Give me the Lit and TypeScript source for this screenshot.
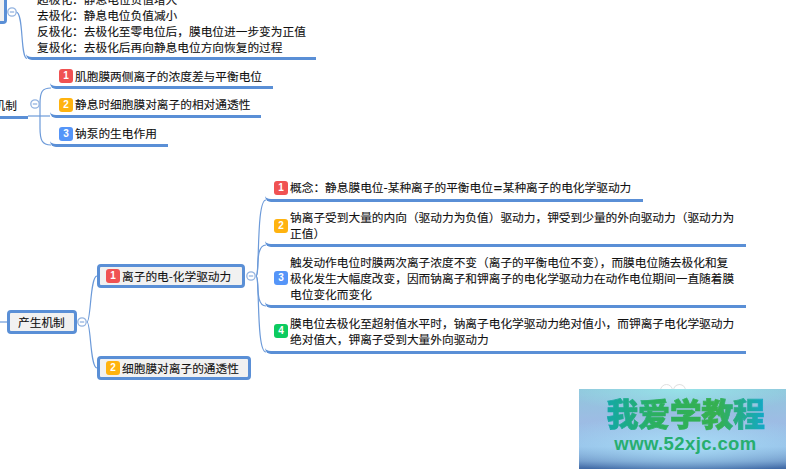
import { LitElement, html, css, svg } from "lit";
import { customElement } from "lit/decorators.js";

type Topic = { x: number; bottom: number; w: number; h: number; n?: number; lines: string[]; pad: number; lift?: number };

const BADGE = ["", "#f05252", "#ffb30f", "#5595f8", "#0ccb5f"];

const topics: Topic[] = [
  { x: 26, bottom: 60, w: 290, h: 70, pad: 11, lift: 2, lines: ["超极化：静息电位负值增大", "去极化：静息电位负值减小", "反极化：去极化至零电位后，膜电位进一步变为正值", "复极化：去极化后再向静息电位方向恢复的过程"] },
  { x: 50, bottom: 89, w: 223, h: 24, n: 1, pad: 9, lines: ["肌胞膜两侧离子的浓度差与平衡电位"] },
  { x: 50, bottom: 118, w: 211, h: 24, n: 2, pad: 9, lift: 2, lines: ["静息时细胞膜对离子的相对通透性"] },
  { x: 50, bottom: 147, w: 118, h: 24, n: 3, pad: 9, lift: 2, lines: ["钠泵的生电作用"] },
  { x: 265, bottom: 202, w: 378, h: 26, n: 1, pad: 9, lines: ["概念：静息膜电位-某种离子的平衡电位=某种离子的电化学驱动力"] },
  { x: 265, bottom: 247, w: 481, h: 40, n: 2, pad: 9, lift: 1, lines: ["钠离子受到大量的内向（驱动力为负值）驱动力，钾受到少量的外向驱动力（驱动力为", "正值）"] },
  { x: 265, bottom: 308, w: 481, h: 58, n: 3, pad: 9, lines: ["触发动作电位时膜两次离子浓度不变（离子的平衡电位不变），而膜电位随去极化和复", "极化发生大幅度改变，因而钠离子和钾离子的电化学驱动力在动作电位期间一直随着膜", "电位变化而变化"] },
  { x: 265, bottom: 354, w: 481, h: 43, n: 4, pad: 9, lines: ["膜电位去极化至超射值水平时，钠离子电化学驱动力绝对值小，而钾离子电化学驱动力", "绝对值大，钾离子受到大量外向驱动力"] },
];

const boxes = [
  { x: 7, y: 310, w: 70, h: 24, pad: 8, label: "产生机制" },
  { x: 97, y: 264, w: 148, h: 24, pad: 6, n: 1, label: "离子的电-化学驱动力" },
  { x: 97, y: 356, w: 154, h: 24, pad: 6, n: 2, label: "细胞膜对离子的通透性" },
];

const wires = [
  "M16 12 C24 12 20 58 27 58.5",
  "M40 104 C40 92 42 88 51 88",
  "M40 104 L40 128 C40 140 42 145 51 145",
  "M28 116 L50 116",
  "M0 322 L7 322",
  "M87 322 C91 322 90 276 97 276",
  "M87 322 C91 322 90 368 97 368",
  "M256 276 C260 276 256 200 266 200",
  "M256 276 C260 276 254 245 266 245",
  "M256 276 C260 276 254 306 266 306",
  "M256 276 C260 276 256 352 266 352",
];

const toggles = [[12, 12], [35, 104], [82, 322], [251, 276]];

const withSymbols = (line: string) =>
  line.split(/([-=])/).map((part) => (part === "-" || part === "=" ? html`<span class="sym">${part}</span>` : part));

@customElement("app-root")
export class AppRoot extends LitElement {
  static styles = css`
    :host { display: block; width: 786px; height: 469px; }
    .canvas {
      position: relative; width: 786px; height: 469px; overflow: hidden; background: #fff;
      font: 11.7px/16px "Noto Sans CJK SC", "Noto Sans", sans-serif; color: #111;
      -webkit-text-stroke: 0.1px #111;
    }
    .sym { font-family: "DejaVu Sans", sans-serif; }
    .wires { position: absolute; inset: 0; }
    .wire { fill: none; stroke: #6c9ad9; stroke-width: 1.2; }
    .toggle { fill: #fff; stroke: #93b3e0; stroke-width: 1.3; }
    .dash { stroke: #93b3e0; stroke-width: 1.3; }
    .topic {
      position: absolute; box-sizing: border-box; display: flex; align-items: center;
      border-bottom: 3px solid #5a8fd6; border-radius: 0 0 0 6px;
    }
    .lines { white-space: nowrap; }
    .badge {
      flex: none; width: 14px; height: 14px; border-radius: 3px; color: #fff; font-weight: 700;
      font-size: 10px; line-height: 14px; text-align: center; margin-right: 2px;
      font-family: "Liberation Sans", sans-serif; -webkit-text-stroke: 0;
    }
    .box {
      position: absolute; box-sizing: border-box; display: flex; align-items: center;
      border: 3px solid #5a8fd6; border-radius: 4px; background: #f1f1f1; white-space: nowrap;
    }
    .stub { position: absolute; left: -10px; top: 101px; width: 38px; height: 15px; border-bottom: 3px solid #5a8fd6; text-align: right; line-height: 8px; }
    .stub span { position: relative; left: -11px; }
    .corner { position: absolute; left: -3px; top: -2px; width: 10px; height: 26px; box-sizing: border-box; border: 3px solid #5a8fd6; border-left: 0; border-top: 0; border-radius: 0 0 4px 0; background: #f1f1f1; }
    .mark {
      position: absolute; left: 579px; top: 389px; width: 207px; height: 80px; overflow: hidden;
      box-sizing: border-box; padding-left: 6px;
      display: flex; flex-direction: column; align-items: center; -webkit-text-stroke: 0;
      background: radial-gradient(ellipse 70% 38% at 50% 70%, #a8dcf6 0%, rgba(168,220,246,0) 100%),
        radial-gradient(ellipse 60% 30% at 50% 0%, #97e2e8 0%, rgba(151,226,232,0) 100%),
        linear-gradient(180deg, #90c6dc 0%, #9dbce4 40%, #95bfe8 72%, #6f97c8 90%, #3f68a4 100%);
    }
    .mark-title {
      margin-top: 4px; font: 900 32px/38px "Noto Sans CJK SC", sans-serif; letter-spacing: -0.4px;
      background: linear-gradient(90deg, #12a8a8 0%, #2bb060 30%, #35b050 70%, #12a8c8 100%);
      -webkit-background-clip: text; background-clip: text; color: transparent;
      -webkit-text-stroke: 0.7px transparent;
    }
    .mark-url { margin-top: 2px; font: 700 18.5px/22px "Liberation Sans", sans-serif; color: #27ae6f; letter-spacing: 0.4px; }
    .ghost { position: absolute; left: 660px; top: 384px; width: 11px; height: 11px; border: 1px solid #e0e0e0; border-radius: 50%; box-shadow: 13px 0 0 -1px #fff, 13px 0 0 0 #e0e0e0; }
  `;

  render() {
    return html`<div class="canvas">
      <svg class="wires" width="786" height="469">
        ${wires.map((d) => svg`<path class="wire" d=${d}></path>`)}
        ${toggles.map(([x, y]) => svg`
          <circle class="toggle" cx=${x} cy=${y} r="4.2"></circle>
          <line class="dash" x1=${x - 2.2} x2=${x + 2.2} y1=${y} y2=${y}></line>`)}
      </svg>
      <div class="corner"></div>
      <div class="stub"><span>机制</span></div>
      ${topics.map((t) => html`<div class="topic" style="left:${t.x}px;top:${t.bottom - t.h}px;width:${t.w}px;height:${t.h}px;padding-left:${t.pad}px">
        ${t.n ? html`<span class="badge" style="background:${BADGE[t.n]}">${t.n}</span>` : ""}
        <div class="lines" style="margin-bottom:${t.lift ?? 0}px">${t.lines.map((l) => html`<div>${withSymbols(l)}</div>`)}</div>
      </div>`)}
      ${boxes.map((b) => html`<div class="box" style="left:${b.x}px;top:${b.y}px;width:${b.w}px;height:${b.h}px;padding-left:${b.pad}px">
        ${b.n ? html`<span class="badge" style="background:${BADGE[b.n]}">${b.n}</span>` : ""}<span>${b.label}</span>
      </div>`)}
      <div class="ghost"></div>
      <div class="mark">
        <div class="mark-title">我爱学教程</div>
        <div class="mark-url">www.52xjc.com</div>
      </div>
    </div>`;
  }
}
